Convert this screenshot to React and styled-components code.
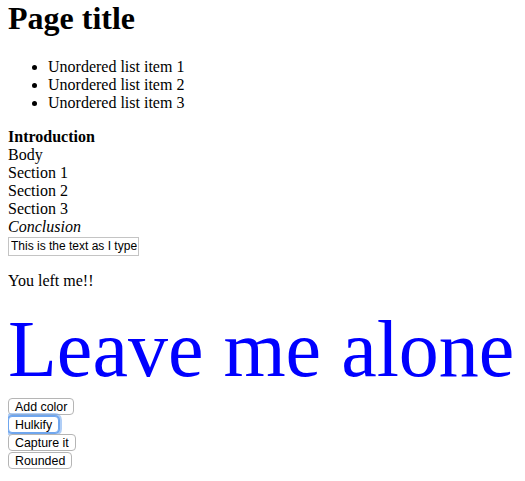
import React from "react";
import styled, { createGlobalStyle } from "styled-components";

const GlobalStyle = createGlobalStyle`
  body {
    margin: 0 8px 8px;
    background: #fff;
    color: #000;
    font-family: "Liberation Serif", "Times New Roman", serif;
    font-size: 16px;
  }
`;

const Title = styled.h1`
  font-size: 32px;
  font-weight: bold;
  margin: 0 0 21.44px;
`;

const List = styled.ul`
  margin: 16px 0;
  padding-left: 40px;
  list-style: disc;
`;

const Line = styled.div`
  font-weight: ${(p) => (p.bold ? "bold" : "normal")};
  font-style: ${(p) => (p.italic ? "italic" : "normal")};
`;

const TextInput = styled.input`
  font-family: "Liberation Sans", Arial, sans-serif;
  font-size: 12px;
  width: 126px;
  height: 15px;
  padding: 1px 1px 1px 2px;
  margin: 0;
  border: 1px solid #c4c4c4;
  color: #000;
  outline: none;
`;

const Para = styled.p`
  margin: 16px 0 13px;
`;

const Shout = styled.div`
  font-size: 80px;
  color: #0000ff;
  line-height: 92px;
`;

const ButtonStack = styled.div`
  display: flex;
  flex-direction: column;
  align-items: flex-start;
  gap: 1px;
  margin-top: 3px;
`;

const Button = styled.button`
  display: block;
  font-family: "Liberation Sans", Arial, sans-serif;
  font-size: 12.4px;
  line-height: 14px;
  color: #000;
  background: #fff;
  border: 1px solid #b5b5b5;
  border-radius: 4px;
  padding: 1px 6px 0;
  height: 17px;
  margin: 0;
  ${(p) =>
    p.focused &&
    `
    box-shadow: 0 0 0 1px #6fa6ee, 0 0 0 3px rgba(111, 166, 238, 0.55);
    border-color: #6fa6ee;
  `}
`;

export default function App() {
  return (
    <>
      <GlobalStyle />
      <Title>Page title</Title>
      <List>
        <li>Unordered list item 1</li>
        <li>Unordered list item 2</li>
        <li>Unordered list item 3</li>
      </List>
      <Line bold>Introduction</Line>
      <Line>Body</Line>
      <Line>Section 1</Line>
      <Line>Section 2</Line>
      <Line>Section 3</Line>
      <Line italic>Conclusion</Line>
      <div>
        <TextInput defaultValue="This is the text as I type" />
      </div>
      <Para>You left me!!</Para>
      <Shout>Leave me alone</Shout>
      <ButtonStack>
        <Button>Add color</Button>
        <Button focused>Hulkify</Button>
        <Button>Capture it</Button>
        <Button>Rounded</Button>
      </ButtonStack>
    </>
  );
}
